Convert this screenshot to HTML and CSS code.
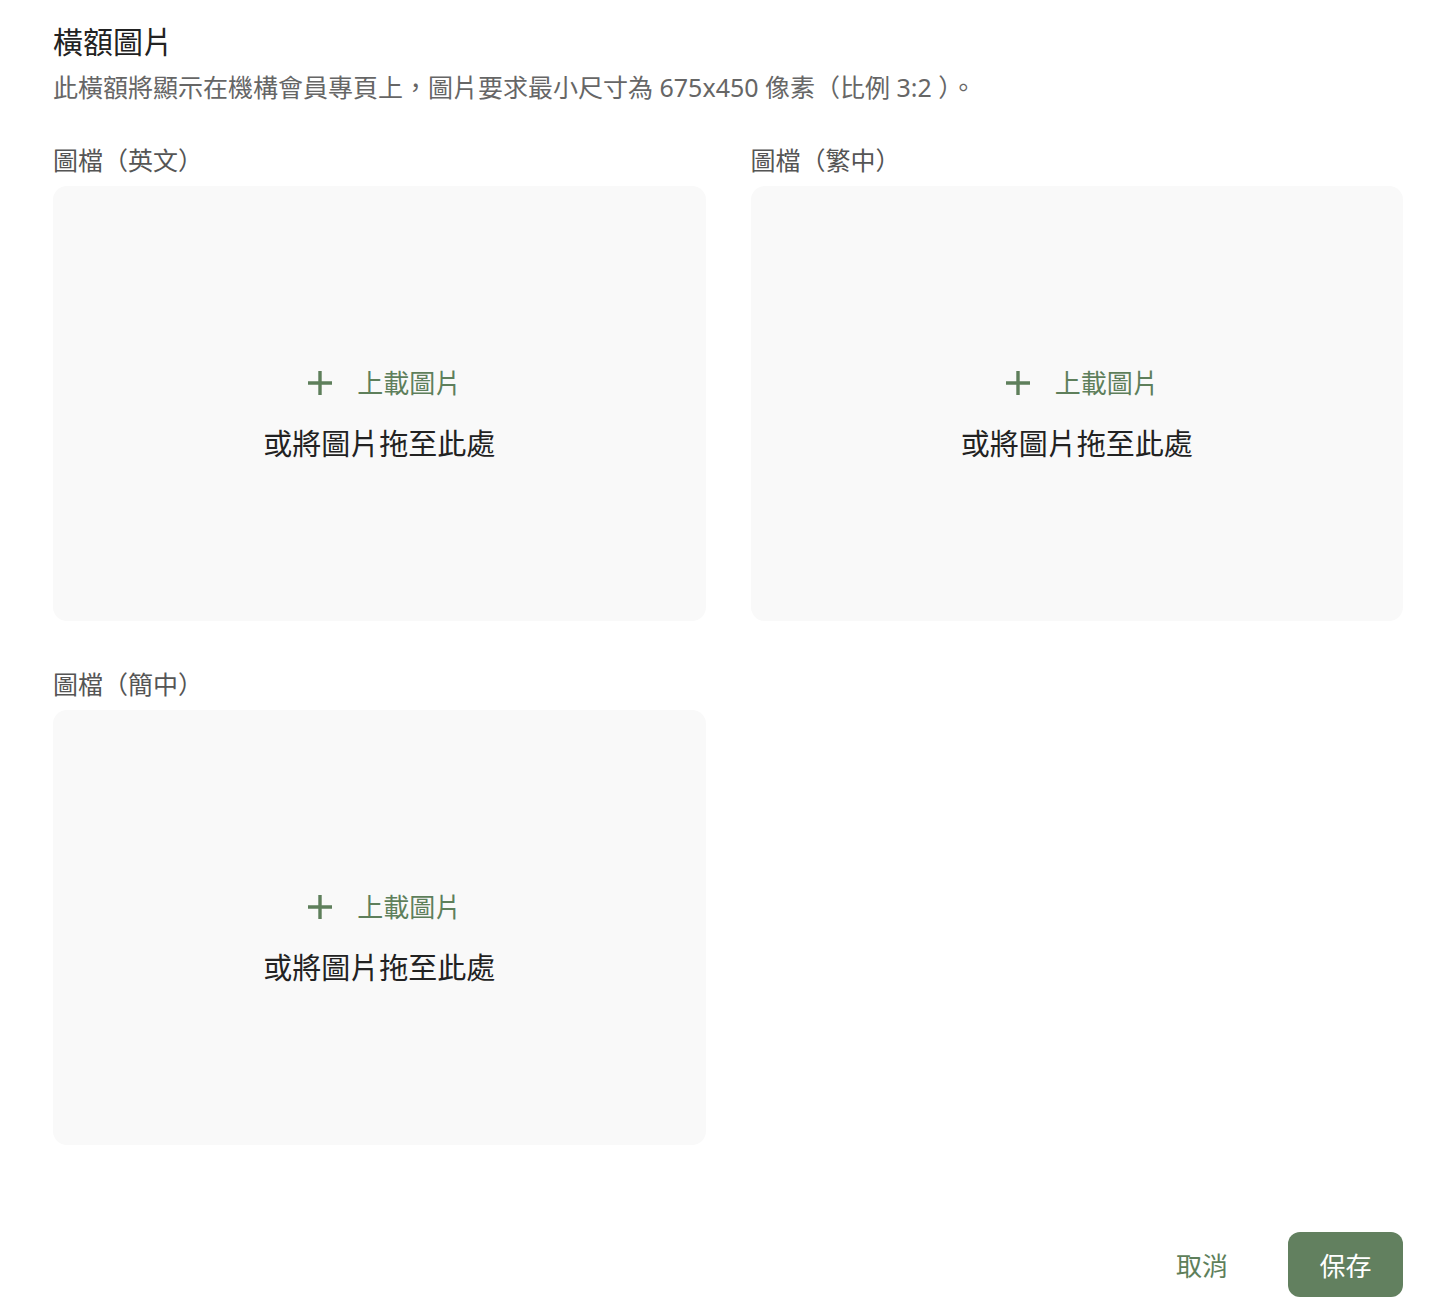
FILE: index.html
```html
<!DOCTYPE html>
<html lang="zh-Hant">
<head>
  <meta charset="UTF-8" />
  <meta name="viewport" content="width=device-width, initial-scale=1.0"/>
  <title>橫額圖片</title>
  <link rel="stylesheet" href="styles.css">
</head>
<body>
  <div class="container">
    <h1>橫額圖片</h1>
    <p class="desc">此橫額將顯示在機構會員專頁上，圖片要求最小尺寸為 675x450 像素（比例 3:2 ）。</p>

    <div class="uploads">
      <div class="field">
        <label>圖檔（英文）</label>
        <div class="dropzone">
          <div class="upload-btn">
            <svg width="26" height="26" viewBox="0 0 26 26"><path d="M13 1v24M1 13h24" stroke="currentColor" stroke-width="3.4" fill="none"/></svg>
            <span>上載圖片</span>
          </div>
          <div class="drop-text">或將圖片拖至此處</div>
        </div>
      </div>

      <div class="field">
        <label>圖檔（繁中）</label>
        <div class="dropzone">
          <div class="upload-btn">
            <svg width="26" height="26" viewBox="0 0 26 26"><path d="M13 1v24M1 13h24" stroke="currentColor" stroke-width="3.4" fill="none"/></svg>
            <span>上載圖片</span>
          </div>
          <div class="drop-text">或將圖片拖至此處</div>
        </div>
      </div>

      <div class="field">
        <label>圖檔（簡中）</label>
        <div class="dropzone">
          <div class="upload-btn">
            <svg width="26" height="26" viewBox="0 0 26 26"><path d="M13 1v24M1 13h24" stroke="currentColor" stroke-width="3.4" fill="none"/></svg>
            <span>上載圖片</span>
          </div>
          <div class="drop-text">或將圖片拖至此處</div>
        </div>
      </div>
    </div>

    <div class="actions">
      <button class="cancel-btn">取消</button>
      <button class="save-btn">保存</button>
    </div>
  </div>
</body>
</html>
```

FILE: styles.css
```css
body {
  margin: 0;
  padding: 0;
  background: #ffffff;
  font-family: "Noto Sans", "Noto Sans CJK TC", sans-serif;
  color: #222;
}

.container {
  padding: 21px 31px 0 53px;
}

h1 {
  margin: 0;
  font-size: 30px;
  line-height: 42px;
  font-weight: 400;
  color: #222;
}

.desc {
  margin: 6px 0 0;
  font-size: 25px;
  line-height: 36px;
  color: #666;
}

.uploads {
  display: grid;
  grid-template-columns: 1fr 1fr;
  column-gap: 45px;
  row-gap: 45px;
  margin-top: 37px;
}

.field label {
  display: block;
  font-size: 25px;
  line-height: 36px;
  color: #555;
  margin-bottom: 8px;
}

.dropzone {
  height: 435px;
  box-sizing: border-box;
  padding-top: 23px;
  background: #f9f9f9;
  border-radius: 14px;
  display: flex;
  flex-direction: column;
  align-items: center;
  justify-content: center;
  gap: 22px;
}

.upload-btn {
  display: flex;
  align-items: center;
  gap: 24px;
  margin-left: 10px;
  color: #5e7f5b;
  font-size: 26px;
  line-height: 36px;
}

.drop-text {
  font-size: 29px;
  line-height: 42px;
  color: #222;
}

.actions {
  display: flex;
  justify-content: flex-end;
  align-items: center;
  gap: 60px;
  margin-top: 87px;
}

.cancel-btn, .save-btn {
  font-family: inherit;
  font-size: 26px;
  border: none;
  cursor: pointer;
}

.cancel-btn {
  background: none;
  color: #5e7f5b;
  padding: 0;
}

.save-btn {
  width: 115px;
  height: 65px;
  background: #62805f;
  color: #fff;
  border-radius: 12px;
}
```
